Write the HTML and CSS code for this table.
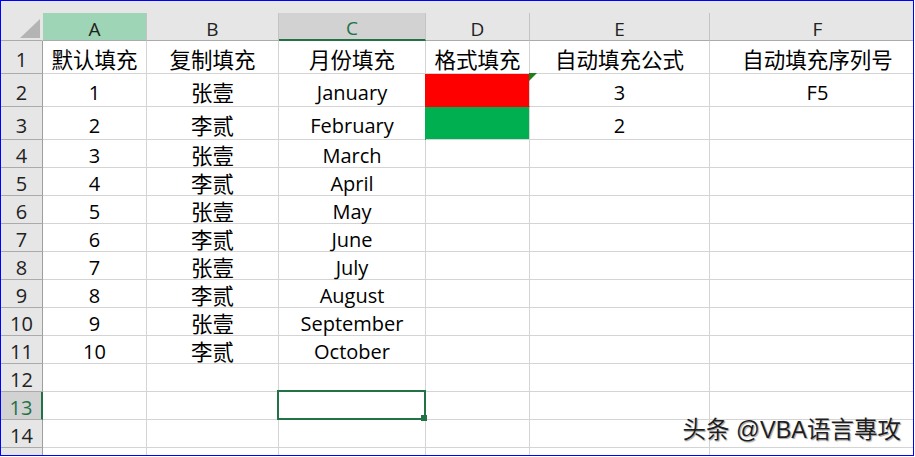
FILE: index.html
```html
<!DOCTYPE html>
<html lang="zh">
<head>
<meta charset="utf-8">
<title>自动填充</title>
<link rel="stylesheet" href="styles.css">
</head>
<body>
<div class="sheet">
  <div class="strip"></div>
  <div class="grid">
    <div class="c corner"><span class="tri"></span></div>
    <div class="c ch ch-hover">A</div>
    <div class="c ch">B</div>
    <div class="c ch ch-sel">C</div>
    <div class="c ch">D</div>
    <div class="c ch">E</div>
    <div class="c ch">F</div>

    <div class="c rh">1</div>
    <div class="c zh">默认填充</div>
    <div class="c zh">复制填充</div>
    <div class="c zh">月份填充</div>
    <div class="c zh">格式填充</div>
    <div class="c zh">自动填充公式</div>
    <div class="c zh">自动填充序列号</div>

    <div class="c rh">2</div>
    <div class="c">1</div>
    <div class="c zh">张壹</div>
    <div class="c">January</div>
    <div class="c red"></div>
    <div class="c err">3</div>
    <div class="c">F5</div>

    <div class="c rh">3</div>
    <div class="c">2</div>
    <div class="c zh">李贰</div>
    <div class="c">February</div>
    <div class="c green"></div>
    <div class="c">2</div>
    <div class="c"></div>

    <div class="c rh">4</div>
    <div class="c">3</div>
    <div class="c zh">张壹</div>
    <div class="c">March</div>
    <div class="c"></div><div class="c"></div><div class="c"></div>

    <div class="c rh">5</div>
    <div class="c">4</div>
    <div class="c zh">李贰</div>
    <div class="c">April</div>
    <div class="c"></div><div class="c"></div><div class="c"></div>

    <div class="c rh">6</div>
    <div class="c">5</div>
    <div class="c zh">张壹</div>
    <div class="c">May</div>
    <div class="c"></div><div class="c"></div><div class="c"></div>

    <div class="c rh">7</div>
    <div class="c">6</div>
    <div class="c zh">李贰</div>
    <div class="c">June</div>
    <div class="c"></div><div class="c"></div><div class="c"></div>

    <div class="c rh">8</div>
    <div class="c">7</div>
    <div class="c zh">张壹</div>
    <div class="c">July</div>
    <div class="c"></div><div class="c"></div><div class="c"></div>

    <div class="c rh">9</div>
    <div class="c">8</div>
    <div class="c zh">李贰</div>
    <div class="c">August</div>
    <div class="c"></div><div class="c"></div><div class="c"></div>

    <div class="c rh">10</div>
    <div class="c">9</div>
    <div class="c zh">张壹</div>
    <div class="c">September</div>
    <div class="c"></div><div class="c"></div><div class="c"></div>

    <div class="c rh">11</div>
    <div class="c">10</div>
    <div class="c zh">李贰</div>
    <div class="c">October</div>
    <div class="c"></div><div class="c"></div><div class="c"></div>

    <div class="c rh">12</div>
    <div class="c"></div><div class="c"></div><div class="c"></div>
    <div class="c"></div><div class="c"></div><div class="c"></div>

    <div class="c rh rh-sel">13</div>
    <div class="c"></div><div class="c"></div>
    <div class="c active"><span class="handle"></span></div>
    <div class="c"></div><div class="c"></div><div class="c"></div>

    <div class="c rh">14</div>
    <div class="c"></div><div class="c"></div><div class="c"></div>
    <div class="c"></div><div class="c"></div><div class="c"></div>

    <div class="c rh"></div>
    <div class="c"></div><div class="c"></div><div class="c"></div>
    <div class="c"></div><div class="c"></div><div class="c"></div>
  </div>
  <div class="watermark">头条 @VBA语言專攻</div>
</div>
</body>
</html>
```

FILE: styles.css
```css
* { box-sizing: border-box; }

body {
  margin: 0;
  background: #ffffff;
}

.sheet {
  width: 914px;
  height: 456px;
  border: 1px solid #0000ff;
  position: relative;
  overflow: hidden;
  background: #ffffff;
  font-family: "Open Sans", "Noto Sans CJK SC", sans-serif;
  color: #000000;
}

.strip {
  height: 12px;
  background: #e6e6e6;
}

.grid {
  display: grid;
  grid-template-columns: 42px 104px 132px 147px 104px 180px 216px;
  grid-template-rows: 28px 33px 33px 33px repeat(12, 28px);
}

.c {
  position: relative;
  display: flex;
  align-items: center;
  justify-content: center;
  border-right: 1px solid #d4d4d4;
  border-bottom: 1px solid #d4d4d4;
  font-size: 20px;
  line-height: 20px;
  padding-top: 5px;
  white-space: nowrap;
}

.zh {
  font-family: "Noto Sans CJK SC", sans-serif;
  font-size: 21.5px;
  padding-top: 3px;
}

.corner {
  background: #e6e6e6;
  border-right-color: #e6e6e6;
  border-bottom-color: #ababab;
}

.tri {
  position: absolute;
  right: 2px;
  bottom: 2px;
  width: 0;
  height: 0;
  border-left: 20px solid transparent;
  border-bottom: 19px solid #b4b4b4;
}

.ch {
  background: #e6e6e6;
  border-right-color: #c4c4c4;
  border-bottom-color: #ababab;
  color: #222222;
  font-size: 19px;
  padding-top: 4px;
}

.ch-hover {
  background: #9fd5b7;
}

.ch-sel {
  background: #d2d2d2;
  color: #217346;
  border-bottom: 2px solid #217346;
}

.rh {
  background: #e6e6e6;
  border-right-color: #9e9e9e;
  border-bottom-color: #ababab;
  color: #222222;
}

.rh-sel {
  background: #d2d2d2;
  color: #217346;
  border-right: 2px solid #217346;
}

.red {
  background: #ff0000;
  border-bottom-color: #ff0000;
  box-shadow: -1px 0 0 #ff0000;
}

.green {
  background: #00b050;
  box-shadow: -1px 0 0 #00b050;
}

.err::before {
  content: "";
  position: absolute;
  top: -1px;
  left: -1px;
  width: 0;
  height: 0;
  border-top: 8px solid #1b7f1b;
  border-right: 8px solid transparent;
}

.active::after {
  content: "";
  position: absolute;
  top: -2px;
  left: -2px;
  right: -1px;
  bottom: -1px;
  border: 2px solid #217346;
}

.handle {
  position: absolute;
  right: -2px;
  bottom: -2px;
  width: 6px;
  height: 6px;
  background: #217346;
  z-index: 2;
}

.watermark {
  position: absolute;
  right: 12px;
  bottom: 13px;
  font-family: "Liberation Sans", "Noto Sans CJK SC", sans-serif;
  font-size: 23.5px;
  line-height: 24px;
  color: #1e1e1e;
  text-shadow: 0 0 1px #ffffff, 1px 1px 1px #9a9a9a;
  white-space: nowrap;
}
```
